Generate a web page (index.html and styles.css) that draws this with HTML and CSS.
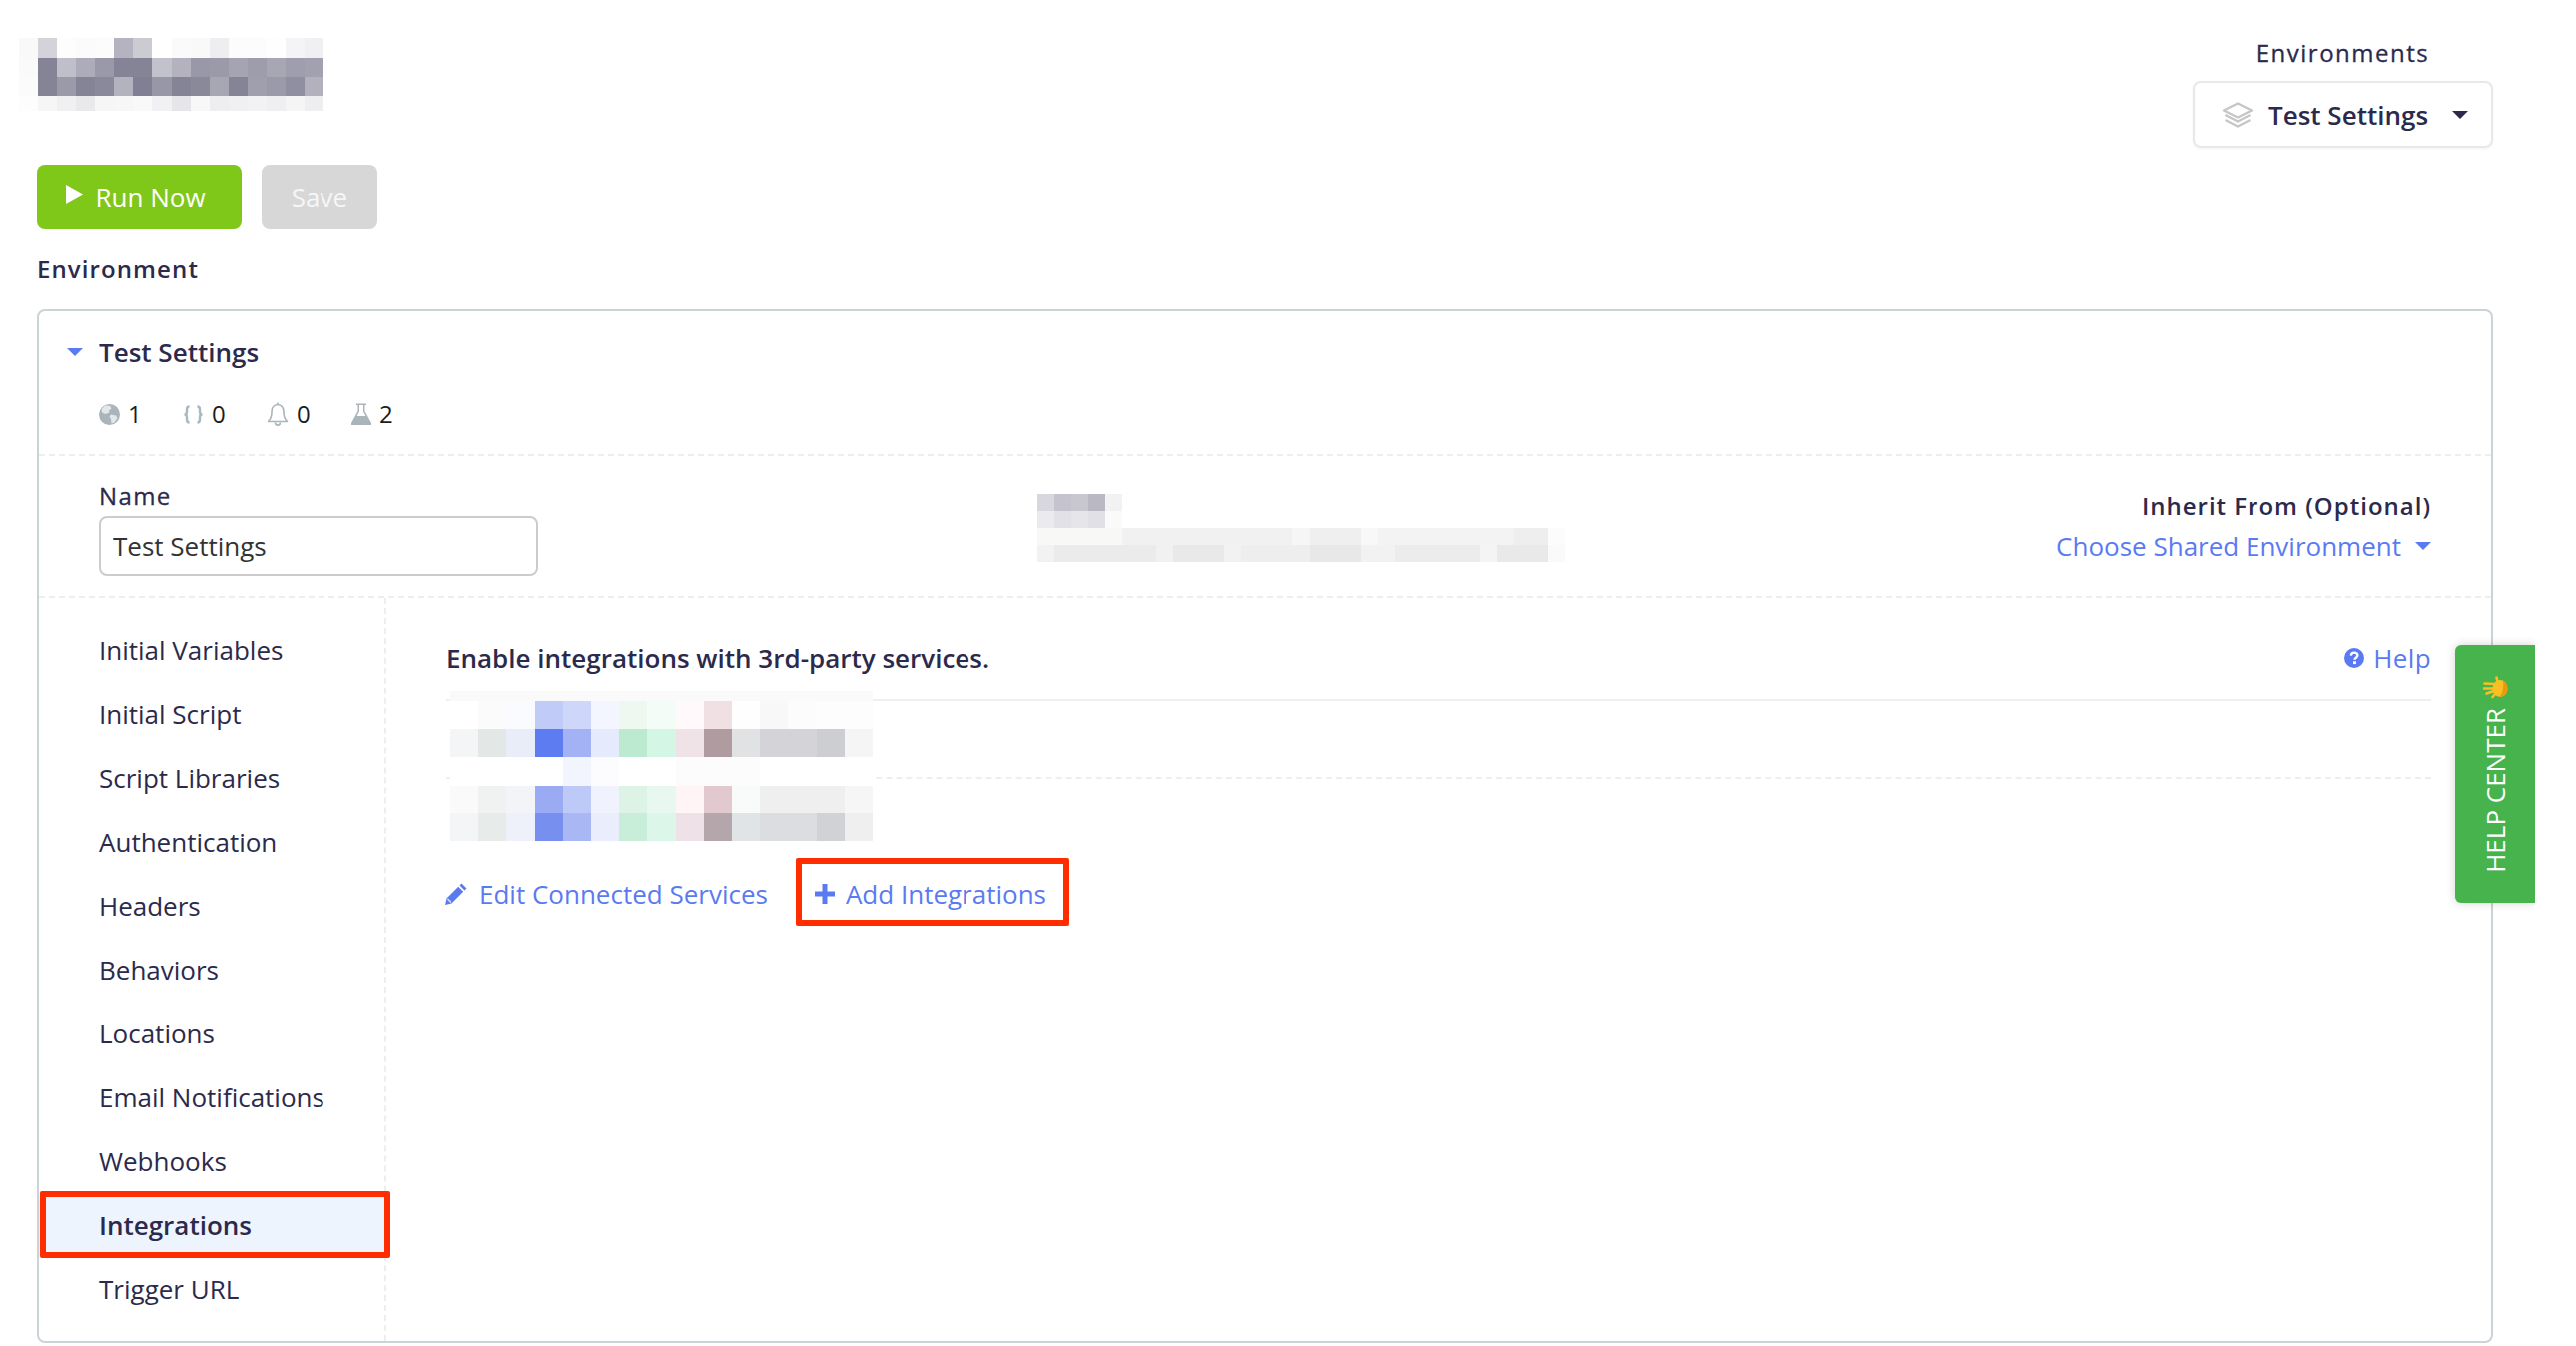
FILE: index.html
```html
<!DOCTYPE html>
<html lang="en">
<head>
<meta charset="utf-8">
<title>Test Settings</title>
<link rel="stylesheet" href="styles.css">
</head>
<body>
<div class="page">
  <header class="top">
    <svg class="logo-blur" viewBox="0 0 16 73" preserveAspectRatio="none" shape-rendering="crispEdges" aria-hidden="true">
      <g>
        <rect x="0" y="0" width="1" height="20" fill="#f9f9f9"/><rect x="1" y="0" width="1" height="20" fill="#d3d3d9"/><rect x="2" y="0" width="1" height="20" fill="#fdfdfd"/><rect x="3" y="0" width="1" height="20" fill="#fbfbfb"/><rect x="4" y="0" width="1" height="20" fill="#fcfcfc"/><rect x="5" y="0" width="1" height="20" fill="#b4b3bf"/><rect x="6" y="0" width="1" height="20" fill="#cbcbd2"/><rect x="7" y="0" width="1" height="20" fill="#ffffff"/><rect x="8" y="0" width="1" height="20" fill="#fafafa"/><rect x="9" y="0" width="1" height="20" fill="#f9f9f9"/><rect x="10" y="0" width="1" height="20" fill="#eeeef1"/><rect x="11" y="0" width="1" height="20" fill="#fcfcfc"/><rect x="12" y="0" width="1" height="20" fill="#fcfcfc"/><rect x="13" y="0" width="1" height="20" fill="#fefefe"/><rect x="14" y="0" width="1" height="20" fill="#f4f4f6"/><rect x="15" y="0" width="1" height="20" fill="#f0f0f2"/>
        <rect x="0" y="20" width="1" height="19" fill="#fafafa"/><rect x="1" y="20" width="1" height="19" fill="#858497"/><rect x="2" y="20" width="1" height="19" fill="#bfbfca"/><rect x="3" y="20" width="1" height="19" fill="#adacba"/><rect x="4" y="20" width="1" height="19" fill="#9a99a9"/><rect x="5" y="20" width="1" height="19" fill="#858497"/><rect x="6" y="20" width="1" height="19" fill="#858497"/><rect x="7" y="20" width="1" height="19" fill="#c2c2cc"/><rect x="8" y="20" width="1" height="19" fill="#b3b2be"/><rect x="9" y="20" width="1" height="19" fill="#9998a9"/><rect x="10" y="20" width="1" height="19" fill="#9b9aa9"/><rect x="11" y="20" width="1" height="19" fill="#a5a4b2"/><rect x="12" y="20" width="1" height="19" fill="#9e9dac"/><rect x="13" y="20" width="1" height="19" fill="#a7a6b3"/><rect x="14" y="20" width="1" height="19" fill="#9f9eae"/><rect x="15" y="20" width="1" height="19" fill="#a2a1b0"/>
        <rect x="0" y="39" width="1" height="19" fill="#fbfbfb"/><rect x="1" y="39" width="1" height="19" fill="#858497"/><rect x="2" y="39" width="1" height="19" fill="#9b9aa9"/><rect x="3" y="39" width="1" height="19" fill="#858497"/><rect x="4" y="39" width="1" height="19" fill="#8a899b"/><rect x="5" y="39" width="1" height="19" fill="#b3b2bf"/><rect x="6" y="39" width="1" height="19" fill="#807f93"/><rect x="7" y="39" width="1" height="19" fill="#9897a8"/><rect x="8" y="39" width="1" height="19" fill="#858497"/><rect x="9" y="39" width="1" height="19" fill="#8a899a"/><rect x="10" y="39" width="1" height="19" fill="#a7a6b3"/><rect x="11" y="39" width="1" height="19" fill="#858497"/><rect x="12" y="39" width="1" height="19" fill="#a09fae"/><rect x="13" y="39" width="1" height="19" fill="#9b9aaa"/><rect x="14" y="39" width="1" height="19" fill="#908fa1"/><rect x="15" y="39" width="1" height="19" fill="#b2b1bd"/>
        <rect x="0" y="58" width="1" height="15" fill="#fdfdfd"/><rect x="1" y="58" width="1" height="15" fill="#f6f6f7"/><rect x="2" y="58" width="1" height="15" fill="#f0f0f2"/><rect x="3" y="58" width="1" height="15" fill="#e9e9ec"/><rect x="4" y="58" width="1" height="15" fill="#f6f6f7"/><rect x="5" y="58" width="1" height="15" fill="#f7f7f8"/><rect x="6" y="58" width="1" height="15" fill="#f9f9fa"/><rect x="7" y="58" width="1" height="15" fill="#f1f1f3"/><rect x="8" y="58" width="1" height="15" fill="#e6e6ea"/><rect x="9" y="58" width="1" height="15" fill="#f8f8f8"/><rect x="10" y="58" width="1" height="15" fill="#eeeef0"/><rect x="11" y="58" width="1" height="15" fill="#f0f0f2"/><rect x="12" y="58" width="1" height="15" fill="#f2f2f4"/><rect x="13" y="58" width="1" height="15" fill="#efeff1"/><rect x="14" y="58" width="1" height="15" fill="#f5f5f6"/><rect x="15" y="58" width="1" height="15" fill="#eeeef0"/>
      </g>
    </svg>
    <div class="env-picker">
      <div class="env-picker-label">Environments</div>
      <div class="env-select">
        <svg class="icon-layers" viewBox="0 0 32 26" aria-hidden="true"><path d="M16 1.500 30 8.500 16 15.500 2 8.500Z" fill="none" stroke="#c6c6c6" stroke-width="2.400" stroke-linejoin="round"/><path d="M3.500 13 16 19.500 28.500 13M3.500 18 16 24.500 28.500 18" fill="none" stroke="#c6c6c6" stroke-width="2.400" stroke-linejoin="round"/></svg>
        <span class="env-select-name">Test Settings</span>
        <span class="caret caret-dark"></span>
      </div>
    </div>
  </header>

  <div class="actions">
    <button class="btn btn-run"><svg class="icon-play" viewBox="0 0 17 19" aria-hidden="true"><path d="M0 0 17 9.500 0 19Z" fill="#fff"/></svg>Run Now</button>
    <button class="btn btn-save">Save</button>
  </div>

  <div class="section-label">Environment</div>

  <section class="panel">
    <div class="panel-head">
      <div class="panel-title"><span class="caret caret-blue"></span>Test Settings</div>
      <div class="stats">
        <span class="stat stat-globe"><svg viewBox="0 0 21 21" aria-hidden="true"><circle cx="10.500" cy="10.500" r="10.500" fill="#a9b5ba"/><path d="M6 1.500 11 1.800 12.500 4.500 10 6.500 10.500 8.500 6.500 10 3 8.500 2.500 5ZM12 10.500 17 11.500 18.500 14 15.500 18.500 12.500 19.500 12 15 10.500 12.500Z" fill="#e2e7e9"/></svg>1</span>
        <span class="stat stat-code"><svg viewBox="0 0 21 21" aria-hidden="true"><path d="M6.500 2.500C4.500 2.500 4 3.500 4 5.500V8C4 9.500 3 10.500 1.500 10.500 3 10.500 4 11.500 4 13V15.500C4 17.500 4.500 18.500 6.500 18.500M14.500 2.500C16.500 2.500 17 3.500 17 5.500V8C17 9.500 18 10.500 19.500 10.500 18 10.500 17 11.500 17 13V15.500C17 17.500 16.500 18.500 14.500 18.500" fill="none" stroke="#a9b8bf" stroke-width="2.400"/></svg>0</span>
        <span class="stat stat-bell"><svg viewBox="0 0 22 25" aria-hidden="true"><path d="M11 2.500C7 2.500 5 6 5 10 5 14.500 4 17 1.500 19.500H20.500C18 17 17 14.500 17 10 17 6 15 2.500 11 2.500Z" fill="none" stroke="#a9b5ba" stroke-width="1.600" stroke-linejoin="round"/><path d="M11 .5V2.500M8.500 20.500C8.500 24 13.500 24 13.500 20.500" fill="none" stroke="#a9b5ba" stroke-width="1.600"/></svg>0</span>
        <span class="stat stat-flask"><svg viewBox="0 0 20 22" aria-hidden="true"><path d="M5 .5H15V2H13.500V8L20 20V22H0V20L6.500 8V2H5Z" fill="#a9b5ba"/><path d="M8 2H12V8.500L14.500 13H5.500L8 8.500Z" fill="#fff"/></svg>2</span>
      </div>
    </div>

    <div class="panel-meta">
      <label class="name-field">
        <span class="field-label">Name</span>
        <input class="field-input" type="text" value="Test Settings">
      </label>
      <svg class="meta-blur" viewBox="0 0 31 4" preserveAspectRatio="none" shape-rendering="crispEdges" aria-hidden="true">
        <rect x="0" y="0" width="1" height="1" fill="#d8d7dd"/><rect x="1" y="0" width="1" height="1" fill="#c4c3ce"/><rect x="2" y="0" width="1" height="1" fill="#c8c7d0"/><rect x="3" y="0" width="1" height="1" fill="#b9b8c3"/><rect x="4" y="0" width="1" height="1" fill="#f2f2f2"/>
        <rect x="0" y="1" width="1" height="1" fill="#ebebef"/><rect x="1" y="1" width="1" height="1" fill="#e2e1e7"/><rect x="2" y="1" width="1" height="1" fill="#e6e5ea"/><rect x="3" y="1" width="1" height="1" fill="#e1e0e7"/><rect x="4" y="1" width="1" height="1" fill="#fafafa"/>
        <rect x="0" y="2" width="5" height="1" fill="#f8f8f7"/><rect x="5" y="2" width="10" height="1" fill="#f1f1f1"/><rect x="15" y="2" width="1" height="1" fill="#f6f6f6"/><rect x="16" y="2" width="3" height="1" fill="#efefef"/><rect x="19" y="2" width="1" height="1" fill="#f8f8f8"/><rect x="20" y="2" width="8" height="1" fill="#f3f3f3"/><rect x="28" y="2" width="2" height="1" fill="#eeeeee"/><rect x="30" y="2" width="1" height="1" fill="#fcfcfc"/>
        <rect x="0" y="3" width="1" height="1" fill="#f2f2f2"/><rect x="1" y="3" width="6" height="1" fill="#ebebeb"/><rect x="7" y="3" width="1" height="1" fill="#f1f1f1"/><rect x="8" y="3" width="3" height="1" fill="#e9e9e9"/><rect x="11" y="3" width="1" height="1" fill="#f2f2f2"/><rect x="12" y="3" width="4" height="1" fill="#eeeeee"/><rect x="16" y="3" width="3" height="1" fill="#e8e8e8"/><rect x="19" y="3" width="2" height="1" fill="#f2f2f2"/><rect x="21" y="3" width="5" height="1" fill="#ececec"/><rect x="26" y="3" width="1" height="1" fill="#f4f4f4"/><rect x="27" y="3" width="3" height="1" fill="#e9e9e9"/><rect x="30" y="3" width="1" height="1" fill="#fafafa"/>
      </svg>
      <div class="inherit">
        <div class="field-label inherit-label">Inherit From (Optional)</div>
        <div class="inherit-choose">Choose Shared Environment<span class="caret caret-blue"></span></div>
      </div>
    </div>

    <div class="panel-body">
      <nav class="side-nav">
        <a class="nav-item">Initial Variables</a>
        <a class="nav-item">Initial Script</a>
        <a class="nav-item">Script Libraries</a>
        <a class="nav-item">Authentication</a>
        <a class="nav-item">Headers</a>
        <a class="nav-item">Behaviors</a>
        <a class="nav-item">Locations</a>
        <a class="nav-item">Email Notifications</a>
        <a class="nav-item">Webhooks</a>
        <a class="nav-item nav-item-active">Integrations<span class="nav-mark"></span></a>
        <a class="nav-item">Trigger URL</a>
      </nav>
      <div class="content">
        <div class="content-head">
          <h2 class="content-title">Enable integrations with 3rd-party services.</h2>
          <a class="help-link"><svg viewBox="0 0 20 20" aria-hidden="true"><circle cx="10" cy="10" r="10" fill="#5a7af2"/><path d="M6.800 7.600C6.900 5.600 8.300 4.600 10.100 4.600 12 4.600 13.400 5.700 13.400 7.300 13.400 9.800 10.500 9.600 10.500 11.700" fill="none" stroke="#fff" stroke-width="2.400"/><rect x="9" y="13.300" width="3" height="2.800" fill="#fff"/></svg>Help</a>
        </div>
        <div class="integrations">
          <div class="integration-row"></div>
          <div class="integration-row integration-row-dashed"></div>
          <svg class="integrations-blur" viewBox="0 0 15 150" preserveAspectRatio="none" shape-rendering="crispEdges" aria-hidden="true">
            <rect x="0" y="0" width="16" height="10" fill="#fafafa"/>
            <rect x="0" y="10" width="1" height="28" fill="#ffffff"/><rect x="1" y="10" width="1" height="28" fill="#fafbfa"/><rect x="2" y="10" width="1" height="28" fill="#fafbff"/><rect x="3" y="10" width="1" height="28" fill="#c0cbf8"/><rect x="4" y="10" width="1" height="28" fill="#ced6fa"/><rect x="5" y="10" width="1" height="28" fill="#f3f6fe"/><rect x="6" y="10" width="1" height="28" fill="#eef8f1"/><rect x="7" y="10" width="1" height="28" fill="#f4fcf7"/><rect x="8" y="10" width="1" height="28" fill="#fff9fb"/><rect x="9" y="10" width="1" height="28" fill="#f0dfe3"/><rect x="10" y="10" width="1" height="28" fill="#fefefe"/><rect x="11" y="10" width="1" height="28" fill="#f8f8f8"/><rect x="12" y="10" width="1" height="28" fill="#fcfcfc"/><rect x="13" y="10" width="2" height="28" fill="#fdfdfd"/>
            <rect x="0" y="38" width="1" height="28" fill="#f4f5f6"/><rect x="1" y="38" width="1" height="28" fill="#e3e8e7"/><rect x="2" y="38" width="1" height="28" fill="#e9edf8"/><rect x="3" y="38" width="1" height="28" fill="#5d7cf2"/><rect x="4" y="38" width="1" height="28" fill="#a3b2f5"/><rect x="5" y="38" width="1" height="28" fill="#e5eafc"/><rect x="6" y="38" width="1" height="28" fill="#bbead0"/><rect x="7" y="38" width="1" height="28" fill="#d3f7e4"/><rect x="8" y="38" width="1" height="28" fill="#f0e3e7"/><rect x="9" y="38" width="1" height="28" fill="#b09ba0"/><rect x="10" y="38" width="1" height="28" fill="#e0e2e3"/><rect x="11" y="38" width="2" height="28" fill="#d4d4d8"/><rect x="13" y="38" width="1" height="28" fill="#cdced2"/><rect x="14" y="38" width="1" height="28" fill="#f5f5f5"/>
            <rect x="0" y="66" width="15" height="29" fill="#ffffff"/><rect x="4" y="66" width="1" height="29" fill="#f2f4fe"/><rect x="5" y="66" width="1" height="29" fill="#fcfcff"/><rect x="8" y="66" width="3" height="29" fill="#fbfcfb"/>
            <rect x="0" y="95" width="1" height="27" fill="#fafafb"/><rect x="1" y="95" width="1" height="27" fill="#f0f2f1"/><rect x="2" y="95" width="1" height="27" fill="#f3f4f8"/><rect x="3" y="95" width="1" height="27" fill="#9aabf3"/><rect x="4" y="95" width="1" height="27" fill="#bdc9f6"/><rect x="5" y="95" width="1" height="27" fill="#f0f2fd"/><rect x="6" y="95" width="1" height="27" fill="#ddf3e6"/><rect x="7" y="95" width="1" height="27" fill="#e8f8f0"/><rect x="8" y="95" width="1" height="27" fill="#fff5f7"/><rect x="9" y="95" width="1" height="27" fill="#e2c9cf"/><rect x="10" y="95" width="1" height="27" fill="#f9fbfa"/><rect x="11" y="95" width="3" height="27" fill="#efeff0"/><rect x="14" y="95" width="1" height="27" fill="#f6f6f6"/>
            <rect x="0" y="122" width="1" height="28" fill="#f4f5f6"/><rect x="1" y="122" width="1" height="28" fill="#e7ebea"/><rect x="2" y="122" width="1" height="28" fill="#eef1fa"/><rect x="3" y="122" width="1" height="28" fill="#7790f0"/><rect x="4" y="122" width="1" height="28" fill="#a9b7f5"/><rect x="5" y="122" width="1" height="28" fill="#eaedfc"/><rect x="6" y="122" width="1" height="28" fill="#c8edd9"/><rect x="7" y="122" width="1" height="28" fill="#dcf7e9"/><rect x="8" y="122" width="1" height="28" fill="#eee2e8"/><rect x="9" y="122" width="1" height="28" fill="#b4a6aa"/><rect x="10" y="122" width="1" height="28" fill="#e1e4e6"/><rect x="11" y="122" width="2" height="28" fill="#dcdde1"/><rect x="13" y="122" width="1" height="28" fill="#d1d2d6"/><rect x="14" y="122" width="1" height="28" fill="#efeff0"/>
          </svg>
        </div>
        <div class="link-row">
          <a class="link-action"><svg class="icon-pencil" viewBox="0 0 22 22" aria-hidden="true"><path d="M16.500.5 21.500 5.500 19.500 7.500 14.500 2.500ZM13.200 3.800 18.200 8.800 6.500 20.500 0 22 1.500 15.500Z" fill="#5a7af2"/><path d="M3 15.500 6.500 19 5.500 20 2 16.500Z" fill="#dfe5fd"/></svg>Edit Connected Services</a>
          <a class="link-action link-action-marked"><svg class="icon-plus" viewBox="0 0 20 20" aria-hidden="true"><path d="M7.500 0H12.500V7.500H20V12.500H12.500V20H7.500V12.500H0V7.500H7.500Z" fill="#5a7af2"/></svg>Add Integrations</a>
        </div>
      </div>
    </div>
  </section>

  <aside class="help-tab">
    <svg class="icon-hand" viewBox="0 0 25 23" aria-hidden="true">
      <path d="M15 8 13.500 1.500M12 8 1.500 7.500M11 12.500 1 12.500M11 15 3.500 17.500M13 17 9.500 21" fill="none" stroke="#fbbf24" stroke-width="2.600" stroke-linecap="round"/>
      <ellipse cx="17" cy="12.500" rx="7.500" ry="8.500" fill="#fbbf24"/>
      <path d="M20 4.500C24 7 25.500 11 24 15 23 18.500 19.500 21 16 21 19.500 18 21 12 20 4.500Z" fill="#e9980f"/>
    </svg>
    <span class="help-tab-text">HELP CENTER</span>
  </aside>
</div>
</body>
</html>
```

FILE: styles.css
```css
* { box-sizing: border-box; }

html, body { height: 100%; }

body {
  margin: 0;
  overflow: hidden;
  background: #fff;
  color: #2b2a4c;
  font-family: "Open Sans", "Liberation Sans", sans-serif;
  font-size: 26px;
}

.page {
  position: relative;
  width: 2539px;
  height: 1348px;
  padding-left: 37px;
}

.top {
  display: flex;
  justify-content: space-between;
  height: 165px;
  padding-right: 42px;
}

.logo-blur {
  display: block;
  width: 305px;
  height: 73px;
  margin: 38px 0 0 -18px;
}

.env-picker {
  width: 301px;
  padding-top: 35px;
  display: flex;
  flex-direction: column;
  align-items: center;
}

.env-picker-label {
  height: 36px;
  margin-bottom: 10px;
  line-height: 36px;
  font-size: 24px;
  letter-spacing: 1.5px;
  -webkit-text-stroke: .3px #2b2a4c;
}

.env-select {
  display: flex;
  align-items: center;
  width: 301px;
  height: 67px;
  padding-left: 27px;
  border: 2px solid #e8e8e8;
  border-radius: 8px;
  box-shadow: 0 1px 3px rgba(0, 0, 0, .05);
}

.icon-layers { width: 32px; height: 26px; flex: none; }

.env-select-name {
  margin: 0 24px 0 15px;
  font-weight: 600;
}

.caret {
  display: inline-block;
  width: 0;
  height: 0;
  border-left: 8px solid transparent;
  border-right: 8px solid transparent;
  border-top: 8px solid;
}

.caret-dark { color: #2b2a4c; }
.caret-blue { color: #5a7af2; }

.actions {
  display: flex;
  gap: 20px;
  height: 64px;
}

.btn {
  display: flex;
  align-items: center;
  justify-content: center;
  border: 0;
  border-radius: 8px;
  color: #fff;
  font: inherit;
  padding: 0;
}

.btn-run { width: 205px; padding-right: 7px; background: #7fc719; }
.btn-save { width: 116px; background: #d7d7d7; color: #f6f6f6; }

.icon-play { width: 17px; height: 19px; margin: -6px 12px 0 0; }

.section-label {
  height: 80px;
  padding-top: 22px;
  line-height: 36px;
  font-size: 24px;
  letter-spacing: 1.1px;
  font-weight: 600;
}

.panel {
  width: 2460px;
  height: 1036px;
  display: flex;
  flex-direction: column;
  border: 2px solid #cbd3d7;
  border-radius: 8px;
}

.panel-head {
  height: 146px;
  flex: none;
  padding-left: 60px;
  border-bottom: 2px dashed #eeeeee;
}

.panel-title {
  position: relative;
  height: 36px;
  margin-top: 24px;
  line-height: 36px;
  font-weight: 600;
}

.panel-title .caret {
  position: absolute;
  left: -32px;
  top: 14px;
}

.stats {
  display: flex;
  margin-top: 28px;
  font-size: 24px;
  line-height: 32px;
  color: #1c1c1c;
}

.stat {
  display: flex;
  align-items: center;
}

.stat svg { flex: none; margin-right: 8px; }

.stat-globe { width: 84px; }
.stat-globe svg { width: 21px; height: 21px; }
.stat-code { width: 84px; }
.stat-code svg { width: 21px; height: 21px; }
.stat-bell { width: 85px; }
.stat-bell svg { width: 22px; height: 25px; }
.stat-flask svg { width: 20px; height: 22px; }

.panel-meta {
  position: relative;
  height: 142px;
  flex: none;
  display: flex;
  justify-content: space-between;
  padding: 0 60px;
  border-bottom: 2px dashed #eeeeee;
}

.name-field {
  display: block;
  width: 440px;
  padding-top: 22px;
}

.field-label {
  display: block;
  height: 36px;
  line-height: 36px;
  font-size: 24px;
  letter-spacing: 1.4px;
  -webkit-text-stroke: .3px #2b2a4c;
}

.field-input {
  display: block;
  width: 440px;
  height: 60px;
  margin-top: 2px;
  padding: 0 12px;
  border: 2px solid #cccccc;
  border-radius: 8px;
  background: #fff;
  color: #333;
  font: inherit;
  outline: 0;
}

.meta-blur {
  position: absolute;
  left: 1000px;
  top: 38px;
  width: 528px;
  height: 68px;
}

.inherit {
  padding-top: 32px;
  text-align: right;
}

.inherit-label {
  font-weight: 600;
  letter-spacing: 1px;
  -webkit-text-stroke: 0;
}

.inherit-choose {
  display: flex;
  align-items: center;
  margin-top: 4px;
  height: 36px;
  color: #5a7af2;
}

.inherit-choose .caret { margin-left: 14px; }

.panel-body {
  flex: 1;
  min-height: 0;
  display: flex;
}

.side-nav {
  width: 348px;
  flex: none;
  padding-top: 20px;
  border-right: 2px dashed #eeeeee;
}

.nav-item {
  position: relative;
  display: block;
  height: 64px;
  padding-left: 60px;
  line-height: 64px;
  color: #2b2a4c;
}

.nav-item-active {
  background: #edf4fe;
  font-weight: 600;
}

.nav-mark {
  position: absolute;
  left: 1px;
  right: -6px;
  top: -2px;
  bottom: -1px;
  border: 6px solid #ff2d00;
  border-radius: 2px;
}

.content {
  flex: 1;
  min-width: 0;
  padding: 0 60px;
}

.content-head {
  display: flex;
  justify-content: space-between;
  align-items: center;
  height: 101px;
  padding-top: 19px;
}

.content-title {
  margin: 0;
  font-size: 26px;
  font-weight: 600;
}

.help-link {
  display: flex;
  align-items: center;
  color: #5a7af2;
  letter-spacing: .4px;
}

.help-link svg { width: 20px; height: 20px; margin-right: 9px; }

.integrations {
  position: relative;
  height: 159px;
}

.integration-row {
  height: 78px;
  border-top: 2px solid #f0f0f0;
}

.integration-row-dashed { border-top: 2px dashed #eeeeee; }

.integrations-blur {
  position: absolute;
  left: 4px;
  top: -8px;
  width: 423px;
  height: 150px;
}

.link-row {
  display: flex;
  align-items: center;
  height: 68px;
  gap: 28px;
  margin-left: -1px;
}

.link-action {
  display: flex;
  align-items: center;
  padding-top: 4px;
  color: #5a7af2;
}

.link-action-marked {
  height: 68px;
  padding: 4px 17px 0 13px;
  border: 6px solid #ff2d00;
  border-radius: 2px;
}

.icon-pencil { width: 22px; height: 22px; margin-right: 12px; }
.icon-plus { width: 20px; height: 20px; margin-right: 11px; }

.help-tab {
  position: absolute;
  left: 2459px;
  top: 646px;
  width: 80px;
  height: 258px;
  display: flex;
  flex-direction: column;
  align-items: center;
  padding-top: 31px;
  background: #46b34c;
  border-radius: 6px 0 0 6px;
  box-shadow: 0 0 10px rgba(0, 0, 0, .18);
  clip-path: inset(-20px 0 -20px -20px);
  color: #fff;
}

.icon-hand { width: 25px; height: 23px; flex: none; }

.help-tab-text {
  margin-top: 9px;
  writing-mode: vertical-rl;
  transform: rotate(180deg);
  font-size: 26px;
  line-height: 32px;
  white-space: nowrap;
}
```
